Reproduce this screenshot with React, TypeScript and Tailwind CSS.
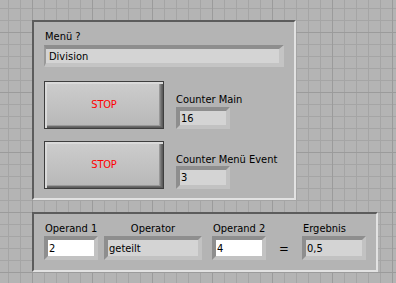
import React from 'react';

const font = { fontFamily: '"DejaVu Sans Condensed", "Liberation Sans", sans-serif' };

const Sunken: React.FC<{ w: string; h: string; white?: boolean; children: React.ReactNode }> = ({ w, h, white, children }) => (
  <div
    className={`${w} ${h} flex items-center border-[4px] border-t-[#8e8e8e] border-l-[#8e8e8e] border-b-[#c2c2c2] border-r-[#c2c2c2] pl-px text-[11px] text-black leading-none ${white ? 'bg-white' : 'bg-[#d4d4d4]'}`}
  >
    {children}
  </div>
);

const StopButton: React.FC = () => (
  <div className="w-[120px] h-[48px] border border-[#3e3e3e] bg-gradient-to-b from-[#cdcdcd] to-[#b7b7b7] shadow-[inset_2px_2px_0_#dadada,inset_-1px_-1px_0_#5c5c5c,inset_-2px_-2px_0_#6a6a6a,inset_-3px_-2px_0_#7e7e7e,inset_-4px_-3px_0_#989898] flex items-center justify-center">
    <span className="text-[11px] text-[#ff0000] tracking-[-0.2px]">STOP</span>
  </div>
);

export default function App() {
  return (
    <div
      style={font}
      className="w-[396px] h-[283px] overflow-hidden bg-[#b4b4b4] bg-[linear-gradient(to_right,#9b9b9b_1px,transparent_1px),linear-gradient(to_bottom,#9b9b9b_1px,transparent_1px),linear-gradient(to_right,#a5a5a5_1px,transparent_1px),linear-gradient(to_bottom,#a5a5a5_1px,transparent_1px)] [background-size:60px_60px,60px_60px,12px_12px,12px_12px] [background-position:32px_32px,32px_32px,8px_8px,8px_8px] flex flex-col pt-[20px] pl-[32px] text-black"
    >
      {/* Menu panel */}
      <div className="w-[264px] h-[180px] border-2 border-t-[#5c5c5c] border-l-[#5c5c5c] border-b-[#e2e2e2] border-r-[#e2e2e2] bg-[#b4b4b4] pl-[10px] pt-[8px] flex flex-col">
        <span className="text-[11px] leading-[13px] pl-px">Menü ?</span>
        <div className="mt-[2px] w-[240px] h-[22px] flex items-center bg-[#d4d4d4] border-t-[4px] border-l-[2px] border-b-[4px] border-r-[5px] border-t-[#8e8e8e] border-l-[#999999] border-b-[#c4c4c4] border-r-[#c4c4c4] pl-[3px] text-[11px] leading-none">
          Division
        </div>

        <div className="mt-[14px] flex gap-[12px]">
          <StopButton />
          <div className="flex flex-col pt-[12px]">
            <span className="text-[11px] leading-[13px]">Counter Main</span>
            <div className="mt-px">
              <Sunken w="w-[54px]" h="h-[22px]">16</Sunken>
            </div>
          </div>
        </div>

        <div className="mt-[12px] flex gap-[12px]">
          <StopButton />
          <div className="flex flex-col pt-[12px]">
            <span className="text-[11px] leading-[13px]">Counter Menü Event</span>
            <Sunken w="w-[54px]" h="h-[23px]">3</Sunken>
          </div>
        </div>
      </div>

      {/* Calculation panel */}
      <div className="mt-[12px] w-[346px] h-[60px] border-2 border-t-[#5c5c5c] border-l-[#5c5c5c] border-b-[#e2e2e2] border-r-[#e2e2e2] bg-[#b4b4b4] pl-[10px] pt-[8px] flex items-start">
        <div className="flex flex-col">
          <span className="text-[11px] leading-[13px] pl-px">Operand 1</span>
          <div className="mt-px">
            <Sunken w="w-[54px]" h="h-[24px]" white>2</Sunken>
          </div>
        </div>
        <div className="flex flex-col items-center ml-[6px]">
          <span className="text-[11px] leading-[13px]">Operator</span>
          <div className="mt-px">
            <Sunken w="w-[98px]" h="h-[24px]">geteilt</Sunken>
          </div>
        </div>
        <div className="flex flex-col ml-[10px]">
          <span className="text-[11px] leading-[13px] pl-px">Operand 2</span>
          <div className="mt-px">
            <Sunken w="w-[54px]" h="h-[24px]" white>4</Sunken>
          </div>
        </div>
        <div className="w-[36px] h-[24px] mt-[14px] flex items-center justify-center text-[13px] leading-none">=</div>
        <div className="flex flex-col">
          <span className="text-[11px] leading-[13px] pl-px">Ergebnis</span>
          <div className="mt-px">
            <Sunken w="w-[64px]" h="h-[24px]">0,5</Sunken>
          </div>
        </div>
      </div>
    </div>
  );
}
